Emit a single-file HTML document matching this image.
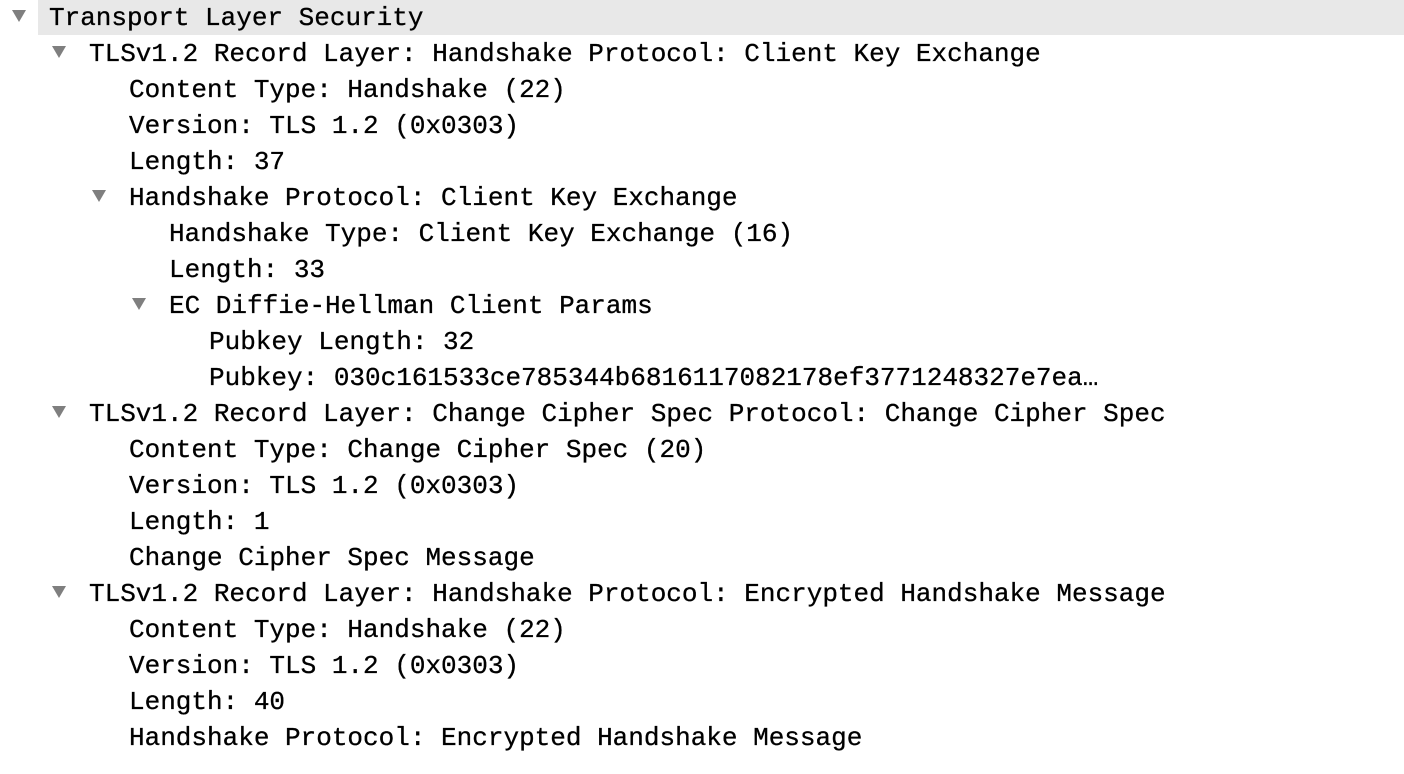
<!DOCTYPE html>
<html><head><style>
body{margin:0;background:#fff;width:1404px;height:774px;overflow:hidden;font-family:"Liberation Mono",monospace;font-size:26px;color:#000}
.r{position:absolute;height:36px;line-height:36px;white-space:pre;left:0;right:0}
.x{position:absolute;-webkit-text-stroke:0.3px #000}
.t{position:absolute;top:11px;width:0;height:0;border-left:7.5px solid transparent;border-right:7.5px solid transparent;border-top:12px solid #7f7f7f}
.hl{position:absolute;left:38px;top:0;width:1366px;height:35px;background:#e8e8e8}
</style></head><body>
<div class="hl"></div>
<div class="r" style="top:0px"><span class="t" style="left:12px;top:10px"></span><span class="x" style="left:49px">Transport Layer Security</span></div>
<div class="r" style="top:36px"><span class="t" style="left:52px;top:10px"></span><span class="x" style="left:89px">TLSv1.2 Record Layer: Handshake Protocol: Client Key Exchange</span></div>
<div class="r" style="top:72px"><span class="x" style="left:129px">Content Type: Handshake (22)</span></div>
<div class="r" style="top:108px"><span class="x" style="left:129px">Version: TLS 1.2 (0x0303)</span></div>
<div class="r" style="top:144px"><span class="x" style="left:129px">Length: 37</span></div>
<div class="r" style="top:180px"><span class="t" style="left:92px;top:10px"></span><span class="x" style="left:129px">Handshake Protocol: Client Key Exchange</span></div>
<div class="r" style="top:216px"><span class="x" style="left:169px">Handshake Type: Client Key Exchange (16)</span></div>
<div class="r" style="top:252px"><span class="x" style="left:169px">Length: 33</span></div>
<div class="r" style="top:288px"><span class="t" style="left:132px;top:10px"></span><span class="x" style="left:169px">EC Diffie-Hellman Client Params</span></div>
<div class="r" style="top:324px"><span class="x" style="left:209px">Pubkey Length: 32</span></div>
<div class="r" style="top:360px"><span class="x" style="left:209px">Pubkey: 030c161533ce785344b6816117082178ef3771248327e7ea…</span></div>
<div class="r" style="top:396px"><span class="t" style="left:52px;top:10px"></span><span class="x" style="left:89px">TLSv1.2 Record Layer: Change Cipher Spec Protocol: Change Cipher Spec</span></div>
<div class="r" style="top:432px"><span class="x" style="left:129px">Content Type: Change Cipher Spec (20)</span></div>
<div class="r" style="top:468px"><span class="x" style="left:129px">Version: TLS 1.2 (0x0303)</span></div>
<div class="r" style="top:504px"><span class="x" style="left:129px">Length: 1</span></div>
<div class="r" style="top:540px"><span class="x" style="left:129px">Change Cipher Spec Message</span></div>
<div class="r" style="top:576px"><span class="t" style="left:52px;top:10px"></span><span class="x" style="left:89px">TLSv1.2 Record Layer: Handshake Protocol: Encrypted Handshake Message</span></div>
<div class="r" style="top:612px"><span class="x" style="left:129px">Content Type: Handshake (22)</span></div>
<div class="r" style="top:648px"><span class="x" style="left:129px">Version: TLS 1.2 (0x0303)</span></div>
<div class="r" style="top:684px"><span class="x" style="left:129px">Length: 40</span></div>
<div class="r" style="top:720px"><span class="x" style="left:129px">Handshake Protocol: Encrypted Handshake Message</span></div>
</body></html>
